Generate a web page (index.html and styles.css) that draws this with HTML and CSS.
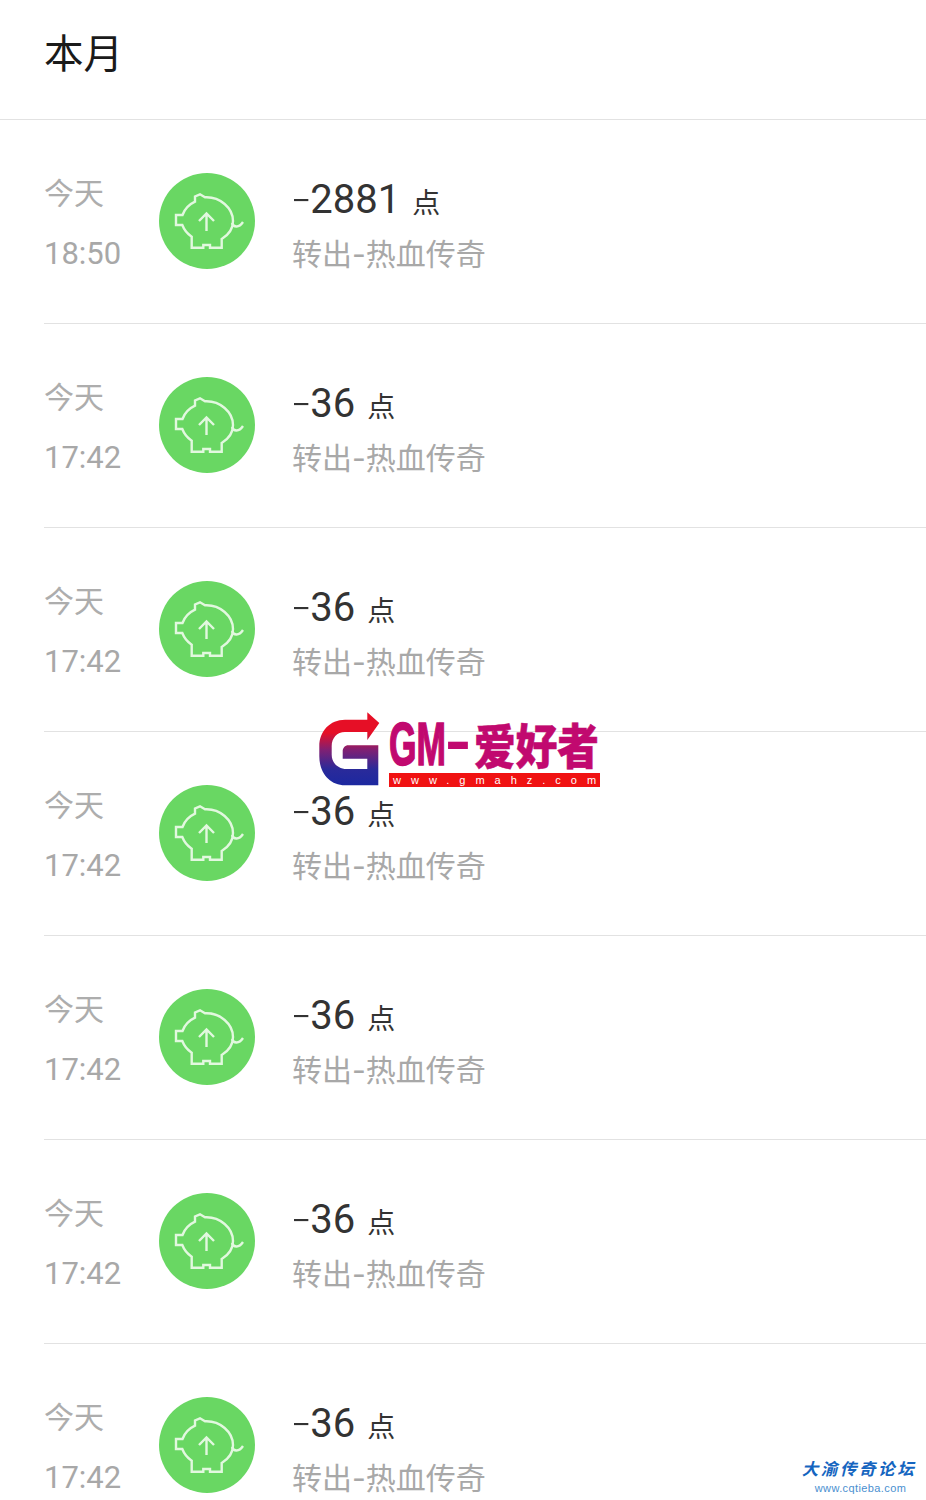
FILE: index.html
```html
<!DOCTYPE html>
<html lang="zh-CN">
<head>
<meta charset="utf-8">
<title>本月</title>
<link rel="stylesheet" href="styles.css">
</head>
<body>
<svg class="defs" width="0" height="0" aria-hidden="true">
  <defs>
    <symbol id="pig-out" viewBox="0 0 96 96">
      <path d="M17 42H23.5C25.5 36.5 30 31.5 36 28.7V23.5L41 21.3L46 24.3C61 23.5 74 35 74 48C74 55 71 61 62.7 66V74.7H51V72H44.3V74.7H32.7V63.7C28 60.5 25 56.5 23.3 52H17Z"/>
      <path d="M73 50C74.5 54.5 80 55 84 49"/>
      <path d="M47.5 58V40.5M40 48L47.5 40.5L55 48"/>
    </symbol>
  </defs>
</svg>
<main class="page">
  <header class="month">本月</header>
  <ul class="ledger">
    <li class="entry">
      <div class="when"><span class="day">今天</span><span class="clock">18:50</span></div>
      <div class="badge"><svg class="pig"><use href="#pig-out"/></svg></div>
      <div class="detail"><div class="amount"><span class="num"><span class="sign">-</span>2881</span><span class="unit">点</span></div><div class="memo">转出-热血传奇</div></div>
    </li>
    <li class="entry">
      <div class="when"><span class="day">今天</span><span class="clock">17:42</span></div>
      <div class="badge"><svg class="pig"><use href="#pig-out"/></svg></div>
      <div class="detail"><div class="amount"><span class="num"><span class="sign">-</span>36</span><span class="unit">点</span></div><div class="memo">转出-热血传奇</div></div>
    </li>
    <li class="entry">
      <div class="when"><span class="day">今天</span><span class="clock">17:42</span></div>
      <div class="badge"><svg class="pig"><use href="#pig-out"/></svg></div>
      <div class="detail"><div class="amount"><span class="num"><span class="sign">-</span>36</span><span class="unit">点</span></div><div class="memo">转出-热血传奇</div></div>
    </li>
    <li class="entry">
      <div class="when"><span class="day">今天</span><span class="clock">17:42</span></div>
      <div class="badge"><svg class="pig"><use href="#pig-out"/></svg></div>
      <div class="detail"><div class="amount"><span class="num"><span class="sign">-</span>36</span><span class="unit">点</span></div><div class="memo">转出-热血传奇</div></div>
    </li>
    <li class="entry">
      <div class="when"><span class="day">今天</span><span class="clock">17:42</span></div>
      <div class="badge"><svg class="pig"><use href="#pig-out"/></svg></div>
      <div class="detail"><div class="amount"><span class="num"><span class="sign">-</span>36</span><span class="unit">点</span></div><div class="memo">转出-热血传奇</div></div>
    </li>
    <li class="entry">
      <div class="when"><span class="day">今天</span><span class="clock">17:42</span></div>
      <div class="badge"><svg class="pig"><use href="#pig-out"/></svg></div>
      <div class="detail"><div class="amount"><span class="num"><span class="sign">-</span>36</span><span class="unit">点</span></div><div class="memo">转出-热血传奇</div></div>
    </li>
    <li class="entry">
      <div class="when"><span class="day">今天</span><span class="clock">17:42</span></div>
      <div class="badge"><svg class="pig"><use href="#pig-out"/></svg></div>
      <div class="detail"><div class="amount"><span class="num"><span class="sign">-</span>36</span><span class="unit">点</span></div><div class="memo">转出-热血传奇</div></div>
    </li>
  </ul>

  <div class="stamp">
    <svg class="stamp-g" viewBox="0 0 61 76">
      <defs>
        <linearGradient id="g-fill" x1="0" y1="0" x2="0" y2="1">
          <stop offset="0.28" stop-color="#e60f26"/>
          <stop offset="0.52" stop-color="#7e2074"/>
          <stop offset="0.78" stop-color="#2a2a9a"/>
          <stop offset="1" stop-color="#1c28a0"/>
        </linearGradient>
      </defs>
      <path fill="url(#g-fill)" d="M60.3 11L48.3 .3V7.7H26C11 7.7 .3 19 .3 34.3V44.3C.3 61 11 73.3 26 73.3H59.3V33.3H29.3C26 33.3 23.7 36 23.7 39.3V46.7H48.3V57H27.7C19 57 12.7 51 12.7 42.7V34.3C12.7 26 18 20 26 20H48.3V28Z"/>
    </svg>
    <div class="stamp-text">
      <svg class="stamp-name" viewBox="0 0 211 50">
        <text class="stamp-latin" x="0" y="44" textLength="57" lengthAdjust="spacingAndGlyphs">GM</text>
        <text class="stamp-dash" x="56" y="40" textLength="26" lengthAdjust="spacingAndGlyphs">-</text>
        <text class="stamp-han" x="85" y="43" textLength="125" lengthAdjust="spacingAndGlyphs">爱好者</text>
      </svg>
      <div class="stamp-url">www.gmahz.com</div>
    </div>
  </div>

  <div class="forum">
    <div class="forum-name">大渝传奇论坛</div>
    <div class="forum-url">www.cqtieba.com</div>
  </div>
</main>
</body>
</html>
```
FILE: styles.css
```css
* { box-sizing: border-box; }

html, body {
  margin: 0;
  padding: 0;
  background: #fff;
}

.defs { position: absolute; }

.page {
  position: relative;
  width: 926px;
  height: 1500px;
  overflow: hidden;
  font-family: Roboto, "Noto Sans CJK SC", sans-serif;
}

.month {
  height: 120px;
  padding: 23px 0 0 44px;
  border-bottom: 1px solid #e2e2e2;
  font: 39.5px/56px "Noto Sans CJK SC", sans-serif;
  color: #1a1a1a;
}

.ledger {
  margin: 0 0 0 44px;
  padding: 0;
  list-style: none;
}

.entry {
  display: flex;
  align-items: center;
  height: 204px;
  border-bottom: 1px solid #e2e2e2;
}

.when {
  display: flex;
  flex-direction: column;
  gap: 17px;
  width: 115px;
  margin-top: 3px;
  color: #a8a8a8;
}

.day {
  font: 400 30px/43px "Noto Sans CJK SC", sans-serif;
  color: #adadad;
}

.clock {
  margin-top: 2px;
  font: 400 31px/44px Roboto, sans-serif;
}

.badge {
  flex: none;
  width: 96px;
  height: 96px;
  margin-bottom: 1px;
  border-radius: 50%;
  background: #69d763;
}

.pig {
  display: block;
  width: 96px;
  height: 96px;
  fill: none;
  stroke: #e2f8df;
  stroke-width: 2.4;
}

.detail {
  margin-left: 37px;
  padding-top: 4px;
}

.amount {
  display: flex;
  align-items: baseline;
  gap: 12px;
  height: 54px;
  color: #333;
}

.num {
  font: 400 40px/54px Roboto, sans-serif;
}

.sign {
  font-family: Inter, sans-serif;
  font-size: 50px;
  font-weight: 200;
  vertical-align: -3px;
  margin-left: -2px;
  margin-right: -2px;
}

.unit {
  font: 400 28px/54px "Noto Sans CJK SC", sans-serif;
}

.memo {
  margin-top: 7px;
  font: 400 30px/44px Inter, "Noto Sans CJK SC", sans-serif;
  color: #a8a8a8;
}

/* site stamp laid over the list */
.stamp {
  position: absolute;
  left: 319px;
  top: 712px;
  display: flex;
  gap: 9px;
}

.stamp-g {
  display: block;
  width: 61px;
  height: 76px;
}

.stamp-text {
  width: 211px;
  margin-top: 9px;
}

.stamp-name {
  display: block;
  width: 211px;
  height: 50px;
  fill: #c1096f;
  stroke: #c1096f;
}

.stamp-latin {
  font: 700 61px "Liberation Sans", sans-serif;
  stroke-width: 1.6;
}

.stamp-dash {
  font: 700 61px "Liberation Sans", sans-serif;
  stroke-width: 0;
}

.stamp-han {
  font: 900 48px "Noto Sans CJK SC", sans-serif;
  stroke-width: 0.5;
}

.stamp-url {
  height: 14px;
  margin-top: 2px;
  padding-left: 4px;
  background: #f01212;
  color: #fff;
  font: 400 11px/14px "Liberation Sans", sans-serif;
  letter-spacing: 10px;
  white-space: nowrap;
  overflow: hidden;
}

/* forum mark in the bottom corner */
.forum {
  position: absolute;
  right: 9px;
  bottom: 5px;
  width: 116px;
  text-align: center;
}

.forum-name {
  font: 700 16.5px/22px "Noto Sans CJK SC", sans-serif;
  font-style: italic;
  letter-spacing: 2.6px;
  color: #1565c0;
  white-space: nowrap;
}

.forum-url {
  margin-top: 3px;
  padding-left: 3px;
  font: 11px/13px "Liberation Sans", sans-serif;
  color: #4a8fd0;
  letter-spacing: 0.4px;
}
```
